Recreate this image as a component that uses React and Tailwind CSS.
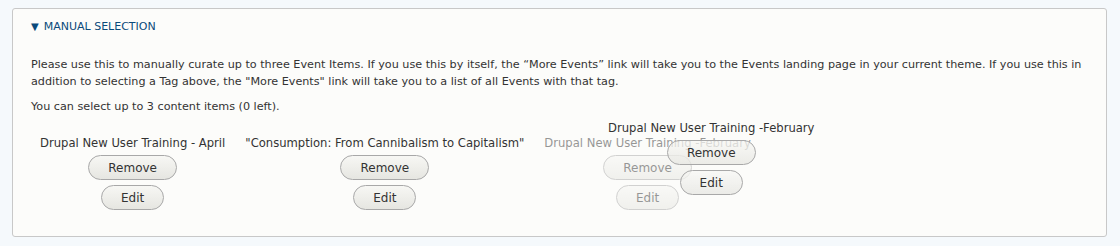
const font = { fontFamily: '"DejaVu Sans", sans-serif' };

function Btn({ children, see }) {
  const bg = see
    ? 'from-[#f7f7f4]/70 to-[#e6e6e1]/75'
    : 'from-[#f7f7f4] to-[#e6e6e1]';
  return (
    <button
      type="button"
      className={`h-[25px] rounded-full border border-[#a8a8a8] bg-gradient-to-b ${bg} px-[19px] text-[12px] leading-none text-[#333]`}
    >
      {children}
    </button>
  );
}

function Item({ title, className = '', see = false }) {
  return (
    <div className={`flex flex-col items-center px-[10px] ${className}`}>
      <div className="whitespace-nowrap text-[11.6px] leading-[17px]">{title}</div>
      <div className="mt-[3px]">
        <Btn see={see}>Remove</Btn>
      </div>
      <div className="mt-[5px]">
        <Btn see={see}>Edit</Btn>
      </div>
    </div>
  );
}

export default function App() {
  return (
    <div className="h-[246px] bg-[#f5f9fc] pl-3 pt-2 text-[11.2px] text-[#333]" style={font}>
      <div className="w-[1095px] rounded-[3px] border border-[#c8c8c8] bg-[#fcfcfa] px-[18px] pt-[10px] pb-[26px]">
        <div className="flex items-center gap-[5px] text-[11px] leading-[16px] text-[#0b4a7a] uppercase">
          <span className="text-[10px]">▼</span>
          <span>Manual Selection</span>
        </div>

        <p className="mt-[21px] leading-[17px]">
          Please use this to manually curate up to three Event Items. If you use this by itself, the &ldquo;More Events&rdquo; link will take you to the Events landing page in your current theme. If you use this in addition to selecting a Tag above, the &quot;More Events&quot; link will take you to a list of all Events with that tag.
        </p>
        <p className="mt-[8px] leading-[17px]">You can select up to 3 content items (0 left).</p>

        <div className="relative mt-[20px] -ml-px flex">
          <Item title="Drupal New User Training - April" />
          <Item title={'"Consumption: From Cannibalism to Capitalism"'} />
          <Item title="Drupal New User Training -February" className="opacity-50" />

          {/* item being dragged */}
          <div className="absolute top-[-15px] left-[568px]">
            <Item title="Drupal New User Training -February" see />
          </div>
        </div>
      </div>
    </div>
  );
}
